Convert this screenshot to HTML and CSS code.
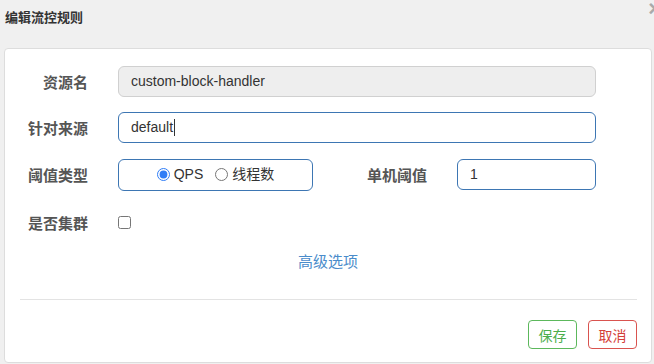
FILE: index.html
```html
<!DOCTYPE html>
<html>
<head>
    <meta charset="utf-8">
    <link rel="stylesheet" href="styles.css">
</head>
<body>
    <div class="modal">
        <div class="modal-header">
            <h4 class="modal-title">编辑流控规则</h4>
            <span class="close">&times;</span>
        </div>
        <div class="modal-body">
            <form class="rule-form">
                <div class="form-row">
                    <label class="control-label">资源名</label>
                    <div class="field field-wide disabled">custom-block-handler</div>
                </div>

                <div class="form-row">
                    <label class="control-label">针对来源</label>
                    <div class="field field-wide active">default<span class="caret"></span></div>
                </div>

                <div class="form-row">
                    <label class="control-label">阈值类型</label>
                    <div class="field radio-box active">
                        <label class="radio-item"><input type="radio" name="grade" checked> QPS</label>
                        <label class="radio-item"><input type="radio" name="grade"> 线程数</label>
                    </div>
                    <label class="control-label label-right">单机阈值</label>
                    <div class="field field-small active">1</div>
                </div>

                <div class="form-row check-row">
                    <label class="control-label">是否集群</label>
                    <input type="checkbox" class="cluster-check">
                </div>

                <div class="advanced">
                    <a href="#" class="advanced-link">高级选项</a>
                </div>
            </form>

            <hr class="divider">

            <div class="button-container">
                <button type="button" class="btn btn-save">保存</button>
                <button type="button" class="btn btn-cancel">取消</button>
            </div>
        </div>
    </div>
</body>
</html>
```

FILE: styles.css
```css
body {
    margin: 0;
    background-color: #f0f0f0;
    font-family: "Liberation Sans", "Noto Sans CJK SC", sans-serif;
    font-size: 14px;
    color: #333;
}

.modal {
    position: relative;
    width: 654px;
    height: 364px;
    overflow: hidden;
}

.modal-header {
    height: 48px;
    padding: 7px 5px 0;
    box-sizing: border-box;
}

.modal-title {
    margin: 0;
    font-size: 13px;
    line-height: 20px;
    font-weight: bold;
    color: #333;
    font-family: "Noto Sans CJK SC", sans-serif;
}

.close {
    position: absolute;
    top: -4px;
    right: -7px;
    font-size: 22px;
    font-weight: bold;
    color: #aaa;
}

.modal-body {
    margin: 0 2px 0 4px;
    height: 315px;
    box-sizing: border-box;
    padding: 17px 0 13px;
    background: #fff;
    border: 1px solid #ddd;
    border-radius: 4px;
}

.form-row {
    display: flex;
    align-items: center;
    height: 31px;
    margin-bottom: 15px;
}

.form-row:nth-child(2) {
    margin-bottom: 16px;
}

.control-label {
    width: 83px;
    margin-right: 30px;
    text-align: right;
    font-family: "Noto Sans CJK SC", sans-serif;
    font-size: 15px;
    font-weight: bold;
    color: #555;
}

.label-right {
    width: 114px;
}

.field {
    height: 31px;
    box-sizing: border-box;
    padding: 0 12px;
    border: 1px solid #ccc;
    border-radius: 6px;
    line-height: 29px;
    font-size: 14px;
    color: #333;
}

.field.active {
    border-color: #3d76b3;
}

.field.disabled {
    background: #eee;
    border-color: #d0d0d0;
}

.field-wide {
    width: 478px;
}

.field-small {
    width: 139px;
}

.caret {
    display: inline-block;
    width: 1px;
    height: 17px;
    margin-left: 1px;
    background: #333;
    vertical-align: -4px;
}

.radio-box {
    width: 195px;
    display: flex;
    justify-content: center;
    align-items: center;
    gap: 12px;
    height: 32px;
}

.radio-item {
    display: flex;
    align-items: center;
    font-size: 14px;
    color: #333;
}

.radio-item input {
    width: 13px;
    height: 13px;
    margin: 0 4px 0 0;
    accent-color: #2f7df6;
}

.check-row {
    height: 34px;
    margin-bottom: 0;
}

.cluster-check {
    width: 13px;
    height: 13px;
    margin: 0;
}

.advanced {
    margin-top: 12px;
    text-align: center;
    line-height: 20px;
}

.advanced-link {
    font-family: "Noto Sans CJK SC", sans-serif;
    font-size: 15px;
    color: #4a8ccb;
    text-decoration: none;
}

.divider {
    margin: 27px 14px 0 15px;
    border: 0;
    border-top: 1px solid #e3e3e3;
}

.button-container {
    display: flex;
    justify-content: flex-end;
    gap: 11px;
    margin: 20px 14px 0 0;
}

.btn {
    width: 49px;
    height: 29px;
    padding: 0;
    background: #fff;
    border: 1px solid;
    border-radius: 4px;
    font-family: "Noto Sans CJK SC", sans-serif;
    font-size: 14px;
    cursor: pointer;
}

.btn-save {
    border-color: #5cb85c;
    color: #4cae4c;
}

.btn-cancel {
    border-color: #d9534f;
    color: #d43f3a;
}
```
